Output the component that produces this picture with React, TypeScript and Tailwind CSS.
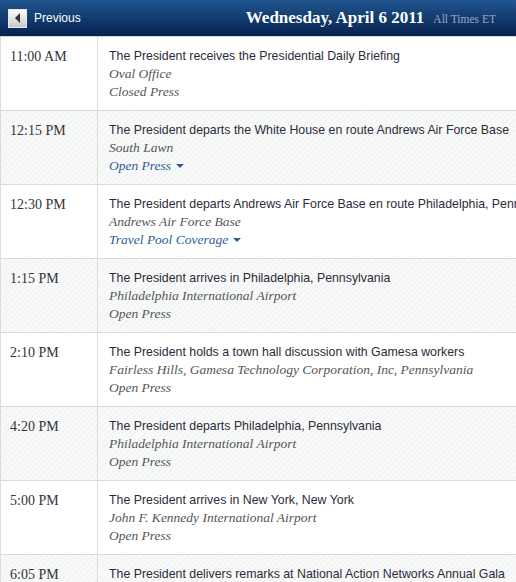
type Event = {
  time: string;
  title: string;
  place: string;
  press: string;
  expandable?: boolean;
};

const events: Event[] = [
  { time: '11:00 AM', title: 'The President receives the Presidential Daily Briefing', place: 'Oval Office', press: 'Closed Press' },
  { time: '12:15 PM', title: 'The President departs the White House en route Andrews Air Force Base', place: 'South Lawn', press: 'Open Press', expandable: true },
  { time: '12:30 PM', title: 'The President departs Andrews Air Force Base en route Philadelphia, Pennsylvania', place: 'Andrews Air Force Base', press: 'Travel Pool Coverage', expandable: true },
  { time: '1:15 PM', title: 'The President arrives in Philadelphia, Pennsylvania', place: 'Philadelphia International Airport', press: 'Open Press' },
  { time: '2:10 PM', title: 'The President holds a town hall discussion with Gamesa workers', place: 'Fairless Hills, Gamesa Technology Corporation, Inc, Pennsylvania', press: 'Open Press' },
  { time: '4:20 PM', title: 'The President departs Philadelphia, Pennsylvania', place: 'Philadelphia International Airport', press: 'Open Press' },
  { time: '5:00 PM', title: 'The President arrives in New York, New York', place: 'John F. Kennedy International Airport', press: 'Open Press' },
  { time: '6:05 PM', title: 'The President delivers remarks at National Action Networks Annual Gala', place: 'Sheraton New York Hotel and Towers', press: 'Open Press' },
];

const serif = "font-['Liberation_Serif','DejaVu_Serif',serif]";

export default function App() {
  return (
    <div className="w-[516px] h-[582px] overflow-hidden bg-white font-['Liberation_Sans',Arial,sans-serif]">
      {/* Header bar */}
      <div className="h-[37px] flex items-center pl-2 pr-5 bg-gradient-to-b from-[#21568f] to-[#072250] border-b border-[#cfd3d8]">
        <div className="w-[19px] h-[19px] flex items-center justify-center bg-gradient-to-b from-white to-[#c9c9c9] border border-[#e8e8e8]">
          <span className="w-0 h-0 border-y-[5px] border-y-transparent border-r-[5px] border-r-[#333] mr-[1px]" />
        </div>
        <span className="ml-[7px] text-[12px] text-white">Previous</span>
        <div className="ml-auto flex items-baseline gap-[9px]">
          <span className={`${serif} text-[17px] font-bold text-white`}>Wednesday, April 6 2011</span>
          <span className={`${serif} text-[11.5px] text-[#93aacb]`}>All Times ET</span>
        </div>
      </div>

      {/* Schedule rows */}
      <div className="border-l border-[#dcdcdc]">
        {events.map((ev, i) => (
          <div
            key={ev.time}
            className={`flex h-[74px] border-b border-[#d9d9d9] ${
              i % 2 === 1
                ? 'bg-[repeating-linear-gradient(135deg,#f3f5f5_0px,#f3f5f5_2px,#f9fafa_2px,#f9fafa_4px)]'
                : 'bg-white'
            }`}
          >
            <div className={`${serif} w-[97px] shrink-0 border-r border-[#dcdcdc] pl-[9px] pt-[9px] text-[14px] text-[#333]`}>
              {ev.time}
            </div>
            <div className="flex-1 min-w-0 overflow-hidden whitespace-nowrap pl-[11px] pt-[10px] leading-[18px]">
              <div className="text-[12.35px] text-[#2e2a3a]">{ev.title}</div>
              <div className={`${serif} italic text-[13.5px] text-[#555]`}>{ev.place}</div>
              <div className={`${serif} italic text-[13.5px] ${ev.expandable ? 'text-[#2f5b96]' : 'text-[#555]'} flex items-center`}>
                {ev.press}
                {ev.expandable && (
                  <span className="ml-[5px] w-0 h-0 border-x-[4px] border-x-transparent border-t-[4px] border-t-[#2f5b96]" />
                )}
              </div>
            </div>
          </div>
        ))}
      </div>
    </div>
  );
}
